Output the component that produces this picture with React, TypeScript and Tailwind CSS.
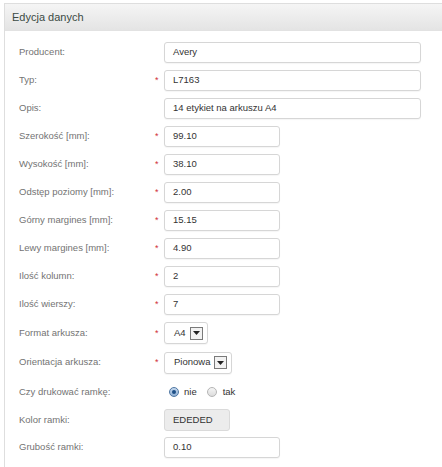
import React from "react";

type Row = {
  label: string;
  required?: boolean;
  kind: "text" | "select" | "radio" | "color";
  value?: string;
  width?: string;
  h?: string;
};

const ROWS: Row[] = [
  { label: "Producent:", kind: "text", value: "Avery", width: "w-[257px]" },
  { label: "Typ:", required: true, kind: "text", value: "L7163", width: "w-[257px]" },
  { label: "Opis:", kind: "text", value: "14 etykiet na arkuszu A4", width: "w-[257px]" },
  { label: "Szerokość [mm]:", required: true, kind: "text", value: "99.10" },
  { label: "Wysokość [mm]:", required: true, kind: "text", value: "38.10" },
  { label: "Odstęp poziomy [mm]:", required: true, kind: "text", value: "2.00" },
  { label: "Górny margines [mm]:", required: true, kind: "text", value: "15.15" },
  { label: "Lewy margines [mm]:", required: true, kind: "text", value: "4.90" },
  { label: "Ilość kolumn:", required: true, kind: "text", value: "2", h: "h-[28.5px]" },
  { label: "Ilość wierszy:", required: true, kind: "text", value: "7" },
  { label: "Format arkusza:", required: true, kind: "select", value: "A4", h: "h-[29px]" },
  { label: "Orientacja arkusza:", required: true, kind: "select", value: "Pionowa", h: "h-[30px]" },
  { label: "Czy drukować ramkę:", kind: "radio", h: "h-[29px]" },
  { label: "Kolor ramki:", kind: "color", value: "EDEDED", h: "h-[27px]" },
  { label: "Grubość ramki:", kind: "text", value: "0.10" },
];

function Field({ row }: { row: Row }) {
  if (row.kind === "select") {
    return (
      <div className="flex h-[22px] items-center rounded-[3px] border border-[#d6d6d6] bg-white pl-[9px] pr-[4px] shadow-[0_1px_1px_rgba(0,0,0,0.04)]">
        <span className="text-[#333]">{row.value}</span>
        <span className="ml-[4px] flex h-[13px] w-[13px] items-center justify-center border border-[#7a7a7a] bg-[#f2f2f2]">
          <svg width="7" height="4" viewBox="0 0 7 4">
            <path d="M0 0 L7 0 L3.5 4 Z" fill="#222" />
          </svg>
        </span>
      </div>
    );
  }
  if (row.kind === "radio") {
    return (
      <div className="flex items-center pl-[5px] text-[#333]">
        <span className="flex h-[10px] w-[10px] items-center justify-center rounded-full border border-[#4f77a3] bg-gradient-to-b from-[#c4d8ee] to-[#8eaed2]">
          <span className="h-[4px] w-[4px] rounded-full bg-[#1d4f86]" />
        </span>
        <span className="ml-[5px]">nie</span>
        <span className="ml-[10px] h-[10px] w-[10px] rounded-full border border-[#b5b5b5] bg-gradient-to-b from-[#f5f5f5] to-[#dcdcdc]" />
        <span className="ml-[6px]">tak</span>
      </div>
    );
  }
  if (row.kind === "color") {
    return (
      <div className="flex h-[22px] w-[66px] items-center rounded-[3px] border border-[#dadada] bg-[#ececec] pl-[8px] text-[#333]">
        {row.value}
      </div>
    );
  }
  return (
    <div
      className={`flex h-[21px] ${row.width ?? "w-[116px]"} items-center rounded-[3px] border border-[#d6d6d6] bg-white pl-[8px] text-[#333] shadow-[0_1px_1px_rgba(0,0,0,0.04)]`}
    >
      {row.value}
    </div>
  );
}

export default function App() {
  return (
    <div className="min-h-[467px] bg-white pl-[4px] pt-[3px] font-['Liberation_Sans',Arial,sans-serif] text-[9.5px]">
      <div className="min-h-[464px] border-l border-t border-[#dedede]">
        <div className="flex h-[27px] items-center border-b border-[#e2e2e2] bg-gradient-to-b from-[#f5f5f5] to-[#e4e4e4] pl-[7px] text-[11px] text-[#3b4a44]">
          Edycja danych
        </div>
        <div className="pt-[7px]">
          {ROWS.map(r => (
            <div key={r.label} className={`flex ${r.h ?? "h-[28px]"} items-center`}>
              <div className="w-[150px] pl-[14px] text-[#737373]">{r.label}</div>
              <div className="flex w-[9px] items-center justify-start">
                {r.required && <span className="text-[9px] leading-none text-[#d0303a]">*</span>}
              </div>
              <Field row={r} />
            </div>
          ))}
        </div>
      </div>
    </div>
  );
}
